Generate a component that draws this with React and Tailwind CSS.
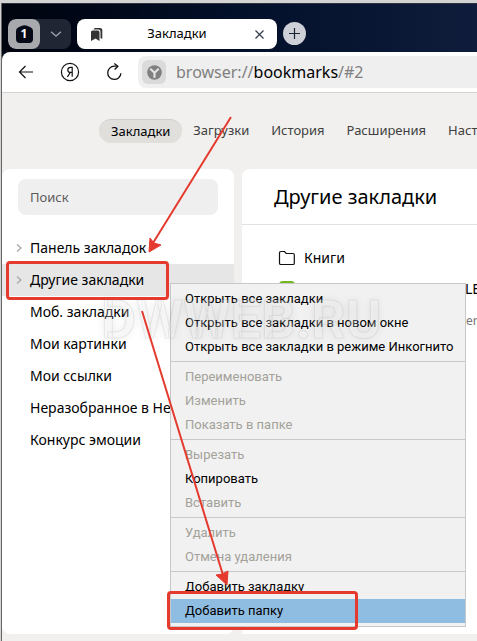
const navItems = ["Закладки", "Загрузки", "История", "Расширения", "Настройки"];

const folders = [
  { name: "Панель закладок", nested: true },
  { name: "Другие закладки", nested: true, selected: true },
  { name: "Моб. закладки" },
  { name: "Мои картинки" },
  { name: "Мои ссылки" },
  { name: "Неразобранное в Нетбуке" },
  { name: "Конкурс эмоции" },
];

const menuGroups = [
  [
    { label: "Открыть все закладки" },
    { label: "Открыть все закладки в новом окне" },
    { label: "Открыть все закладки в режиме Инкогнито" },
  ],
  [
    { label: "Переименовать", disabled: true },
    { label: "Изменить", disabled: true },
    { label: "Показать в папке", disabled: true },
  ],
  [
    { label: "Вырезать", disabled: true },
    { label: "Копировать" },
    { label: "Вставить", disabled: true },
  ],
  [
    { label: "Удалить", disabled: true },
    { label: "Отмена удаления", disabled: true },
  ],
  [{ label: "Добавить закладку" }, { label: "Добавить папку", active: true }],
];

function TabStrip() {
  return (
    <div className="flex h-[49px] items-end border-t border-[#30343c] bg-linear-to-r from-[#00040e] via-[#03102a] to-[#0f1c3b] pb-[3px] pl-1.5">
      <div className="flex h-[30px] w-[63px] shrink-0 overflow-hidden rounded-lg bg-[#202633]">
        <button
          type="button"
          aria-label="Группа вкладок 1"
          className="flex w-8 items-center justify-center rounded-lg bg-[#a7a9ad]"
        >
          <span className="relative flex h-[18px] w-[17px] items-center justify-center text-xs font-bold text-white">
            <svg className="absolute inset-0" width="17" height="18" viewBox="0 0 17 18" fill="#050a16">
              <path d="M6 .8Q8.500-.5 11 .8l3.500 1.500Q17 3.500 17 6v8q0 4-4 4H4q-4 0-4-4V6q0-2.500 2.500-3.700Z" />
            </svg>
            <span className="relative">1</span>
          </span>
        </button>
        <button
          type="button"
          aria-label="Список вкладок"
          className="flex flex-1 items-center justify-center text-[#9a9da5]"
        >
          <svg width="12" height="6" viewBox="0 0 12 6" fill="none" stroke="currentColor" strokeWidth="1.4">
            <path d="M1 .8 6 5l5-4.2" />
          </svg>
        </button>
      </div>

      <div className="ml-1.5 flex h-[30px] w-[200px] shrink-0 items-center rounded-lg bg-white pl-3.5 pr-2.5">
        <svg width="12" height="13" viewBox="0 0 12 13" fill="#333">
          <path d="M1.500 2.500h5.500A1.500 1.500 0 0 1 8.500 4v9l-4-2.400L0 13V4a1.500 1.500 0 0 1 1.500-1.500Z" />
          <path d="M2.500 1.500C2.800.6 3.500 0 4.500 0H9a2.300 2.300 0 0 1 2.300 2.300V11l-1.800-1V3.500a2 2 0 0 0-2-2Z" />
        </svg>
        <span className="flex-1 text-center text-[13px] text-black">Закладки</span>
        <button type="button" aria-label="Закрыть вкладку" className="flex h-4 w-4 items-center justify-center">
          <svg width="9" height="9" viewBox="0 0 9 9" stroke="#333b4a" strokeWidth="1.2">
            <path d="m.5.5 8 8m0-8-8 8" />
          </svg>
        </button>
      </div>

      <button
        type="button"
        aria-label="Новая вкладка"
        className="mb-1 ml-1.5 flex h-[23px] w-[23px] shrink-0 items-center justify-center rounded-full bg-[#cdd0d6]"
      >
        <svg width="11" height="11" viewBox="0 0 11 11" stroke="#1b2433" strokeWidth="1.2">
          <path d="M5.500 0v11M0 5.500h11" />
        </svg>
      </button>
    </div>
  );
}

function AddressBar() {
  return (
    <div className="bg-[#020a1c]">
      <div className="flex h-[41px] items-center rounded-tl-lg border-b border-[#d4d3d1] bg-white pl-4">
        <button type="button" aria-label="Назад" className="shrink-0">
          <svg width="16" height="14" viewBox="0 0 16 14" fill="none" stroke="#111" strokeWidth="1.2">
            <path d="M15 7H1.500M7.500 1l-6 6 6 6" />
          </svg>
        </button>
        <button type="button" aria-label="Яндекс" className="ml-[26px] shrink-0">
          <svg width="20" height="20" viewBox="0 0 20 20" fill="none" stroke="#111" strokeWidth="1.2">
            <circle cx="10" cy="10" r="8.600" />
            <path d="M12.200 14.800V5.300h-1.500c-1.800 0-2.900 1-2.900 2.600s1 2.500 2.700 2.500h1.700M10.300 10.500l-2.900 4.300" />
          </svg>
        </button>
        <button type="button" aria-label="Обновить" className="ml-[26px] shrink-0">
          <svg width="18" height="18" viewBox="0 0 18 18" fill="none" stroke="#111" strokeWidth="1.300">
            <path d="M10.800 3.200H8.300a6.600 6.600 0 1 0 6.600 7" />
            <path d="m8.300.5 3.600 2.700-3.300 3.300" />
          </svg>
        </button>
        <div className="ml-3.5 flex h-8 flex-1 items-center rounded-l-lg bg-[#efefef] pl-1">
          <span className="flex h-6 w-6 items-center justify-center rounded-md bg-[#dadada]">
            <svg width="15" height="15" viewBox="0 0 15 15">
              <circle cx="7.500" cy="7.500" r="7.300" fill="#808080" />
              <path d="m3.300 3.700 4.200 4 4.200-4M7.500 7.700v5" fill="none" stroke="#e2e2e2" strokeWidth="2.200" />
            </svg>
          </span>
          <span className="ml-2.5 text-base text-[#808080]">
            browser://<span className="text-black">bookmarks</span>/#2
          </span>
        </div>
      </div>
    </div>
  );
}

function Sidebar() {
  return (
    <aside className="w-[232px] shrink-0 overflow-hidden rounded-lg bg-white pt-2.5">
      <input
        type="text"
        aria-label="Поиск"
        placeholder="Поиск"
        className="mx-4 mb-[17px] block h-9 w-[200px] rounded-lg bg-[#efefef] px-3 text-[13px] placeholder:text-[#5c5c5c]"
      />
      <ul>
        {folders.map((folder) => (
          <li key={folder.name}>
            <button
              type="button"
              className={`flex h-8 w-full items-center whitespace-nowrap text-left text-sm text-black ${
                folder.selected ? "bg-[#e6e6e6]" : ""
              }`}
            >
              <span className="w-[28px] shrink-0 pl-3.5">
                {folder.nested && (
                  <svg width="6" height="8" viewBox="0 0 6 8" fill="none" stroke="#a8a8a8" strokeWidth="1.3">
                    <path d="m1 .5 4 3.500-4 3.500" />
                  </svg>
                )}
              </span>
              {folder.name}
            </button>
          </li>
        ))}
      </ul>
    </aside>
  );
}

function BookmarkList() {
  return (
    <main className="min-w-0 flex-1 overflow-hidden rounded-tl-lg bg-white">
      <h1 className="flex h-14 items-center border-b border-[#e2e2e2] pl-8 text-xl text-black">
        Другие закладки
      </h1>
      <div className="mt-[17px] flex h-8 items-center pl-9 text-sm text-black">
        <svg width="18" height="16" viewBox="0 0 18 16" fill="none" stroke="#111" strokeWidth="1.2">
          <path d="M1.500 2.800c0-.8.500-1.300 1.300-1.300h3.700l1.700 2H15c.8 0 1.300.5 1.300 1.300v8.400c0 .8-.5 1.300-1.300 1.300H2.800c-.8 0-1.300-.5-1.300-1.300Z" />
        </svg>
        <span className="ml-2">Книги</span>
      </div>
      <div className="flex items-start whitespace-nowrap pl-[37px] pt-[7px]">
        <span className="h-4 w-4 shrink-0 rounded-sm bg-[#72b81f]" />
        <span className="ml-[170px] text-sm leading-4 text-black">LED</span>
      </div>
      <p className="pl-[224px] pt-4 text-xs text-[#777]">er</p>
    </main>
  );
}

function ContextMenu() {
  return (
    <div
      role="menu"
      className="absolute left-[170px] top-[283px] w-[296px] divide-y divide-[#c8c8c8] border border-[#c8c8c8] bg-[#f1f1f1] pb-px font-[Roboto,sans-serif]"
    >
      {menuGroups.map((group) => (
        <div key={group[0].label} role="group" className="pb-0.5 pt-[3px]">
          {group.map((item) => (
            <button
              key={item.label}
              type="button"
              role="menuitem"
              disabled={item.disabled}
              className={`flex h-6 w-full items-center whitespace-nowrap pl-3.5 text-[13px] ${
                item.disabled ? "text-[#a3a199]" : "text-black"
              } ${item.active ? "bg-[#8fbde2]" : ""}`}
            >
              {item.label}
            </button>
          ))}
        </div>
      ))}
    </div>
  );
}

function Annotations() {
  return (
    <div className="pointer-events-none absolute inset-0">
      <span className="absolute left-[101px] top-[275px] font-[Roboto,sans-serif] text-[54px] font-bold leading-[90px] text-white/25 [-webkit-text-stroke:1px_rgba(130,130,130,0.14)] [text-shadow:0_0_8px_rgba(0,0,0,0.08)]">
        DWWEB.RU
      </span>
      <svg className="absolute left-0 top-0" width="477" height="641" fill="#e53a2e" stroke="#e53a2e">
        <path d="M231 117 153 243M142 311l81 264" strokeWidth="2" />
        <path d="m149 252 1-14 4 5 7 2ZM227 585l-11-10 6-1 6-3Z" strokeWidth="1" />
      </svg>
      <div className="absolute left-1.5 top-[261px] h-[39px] w-[163px] rounded-sm border-3 border-[#e53a2e]" />
      <div className="absolute left-[167px] top-[591px] h-[39px] w-[191px] rounded-sm border-3 border-[#e53a2e]" />
    </div>
  );
}

export default function App() {
  return (
    <div className="relative min-h-screen overflow-hidden bg-[#d3d3d3] pt-[3px] font-['Noto_Sans',sans-serif]">
      <div className="ml-px flex min-h-[calc(100vh-3px)] flex-col border-l border-[#666] bg-[#f1f0ee]">
        <TabStrip />
        <AddressBar />
        <nav className="flex items-center overflow-hidden whitespace-nowrap py-[26px] pl-[97px]">
          {navItems.map((item, index) => (
            <a
              key={item}
              href="#2"
              className={`flex h-6 items-center rounded-full text-[13px] ${
                index === 0 ? "border-t border-[#d0cfcc] bg-[#e0dfdc] px-3 text-black" : "px-[11px] text-[#404040]"
              }`}
            >
              {item}
            </a>
          ))}
        </nav>
        <div className="flex flex-1 gap-2 pb-[7px]">
          <Sidebar />
          <BookmarkList />
        </div>
      </div>
      <ContextMenu />
      <Annotations />
    </div>
  );
}
